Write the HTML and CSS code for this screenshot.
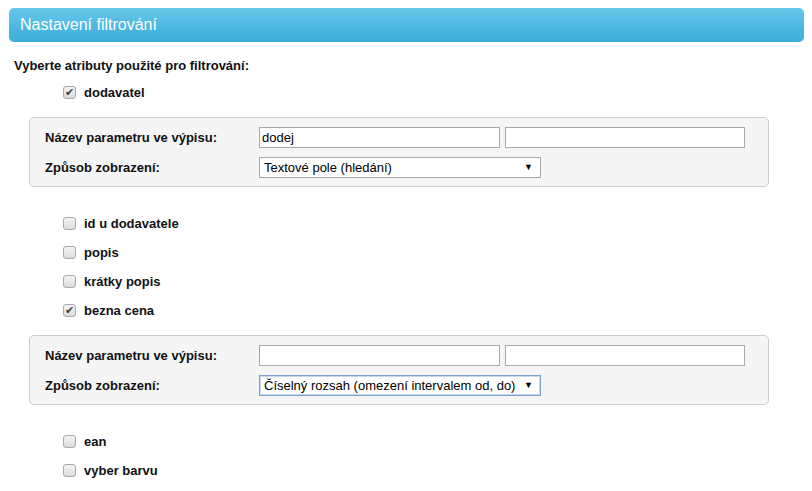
FILE: index.html
```html
<!DOCTYPE html>
<html lang="cs">
<head>
<meta charset="utf-8">
<title>Nastavení filtrování</title>
<link rel="stylesheet" href="styles.css">
</head>
<body>
<div class="header">Nastavení filtrování</div>
<div class="intro">Vyberte atributy použité pro filtrování:</div>
<div class="opt"><span class="cb checked"></span><span class="opt-label">dodavatel</span></div>
<div class="box">
  <div class="row">
    <div class="label">Název parametru ve výpisu:</div>
    <input class="inp inp1" type="text" value="dodej">
    <input class="inp inp2" type="text" value="">
  </div>
  <div class="row">
    <div class="label">Způsob zobrazení:</div>
    <div class="sel"><span class="sel-text">Textové pole (hledání)</span><span class="arrow">▼</span></div>
  </div>
</div>
<div class="opt first"><span class="cb"></span><span class="opt-label">id u dodavatele</span></div>
<div class="opt"><span class="cb"></span><span class="opt-label">popis</span></div>
<div class="opt"><span class="cb"></span><span class="opt-label">krátky popis</span></div>
<div class="opt"><span class="cb checked"></span><span class="opt-label">bezna cena</span></div>
<div class="box">
  <div class="row">
    <div class="label">Název parametru ve výpisu:</div>
    <input class="inp inp1" type="text" value="">
    <input class="inp inp2" type="text" value="">
  </div>
  <div class="row">
    <div class="label">Způsob zobrazení:</div>
    <div class="sel focus"><span class="sel-text">Číselný rozsah (omezení intervalem od, do)</span><span class="arrow">▼</span></div>
  </div>
</div>
<div class="opt first"><span class="cb"></span><span class="opt-label">ean</span></div>
<div class="opt"><span class="cb"></span><span class="opt-label">vyber barvu</span></div>
</body>
</html>
```
FILE: styles.css
```css
html, body {
  margin: 0;
  padding: 0;
  background: #ffffff;
}
body {
  font-family: "Liberation Sans", Arial, sans-serif;
  font-size: 13px;
  color: #111111;
  padding-top: 8px;
}
.header {
  margin: 0 8px 0 9px;
  height: 34px;
  line-height: 33px;
  padding-left: 11px;
  border-radius: 5px;
  background: linear-gradient(to bottom, #68c7eb 0%, #4bb7e0 60%, #3aaed9 100%);
  color: #ffffff;
  font-size: 16px;
}
.intro {
  margin: 14px 0 2px 14px;
  height: 20px;
  line-height: 20px;
  font-weight: bold;
}
.opt {
  display: flex;
  align-items: center;
  height: 29px;
  padding-left: 63px;
}
.opt.first {
  margin-top: 22px;
}
.cb {
  width: 11px;
  height: 11px;
  border: 1px solid #a9a9a9;
  border-radius: 3px;
  background: linear-gradient(to bottom, #f4f4f4, #dcdcdc);
  position: relative;
  margin-right: 8px;
  margin-top: -1px;
}
.cb.checked::after {
  content: "✔";
  position: absolute;
  left: 1px;
  top: -2px;
  font-size: 11px;
  line-height: 14px;
  color: #444444;
}
.opt-label {
  font-weight: bold;
}
.box {
  margin: 10px 43px 0 29px;
  border: 1px solid #cccccc;
  border-radius: 5px;
  background: #f5f5f5;
  padding: 9px 15px;
  display: flex;
  flex-direction: column;
  gap: 10px;
}
.row {
  display: flex;
  align-items: center;
  height: 20px;
}
.label {
  width: 214px;
  font-weight: bold;
}
.inp {
  box-sizing: border-box;
  height: 21px;
  border: 1px solid #a9a9a9;
  background: #ffffff;
  font-family: "Liberation Sans", Arial, sans-serif;
  font-size: 13px;
  color: #000000;
  padding: 0 2px;
  margin: 0;
}
.inp1 {
  width: 241px;
  margin-right: 5px;
}
.inp2 {
  width: 240px;
}
.sel {
  box-sizing: border-box;
  width: 282px;
  height: 21px;
  border: 1px solid #a9a9a9;
  background: #ffffff;
  display: flex;
  align-items: center;
  justify-content: space-between;
  padding: 0 7px 0 4px;
  color: #000000;
}
.sel.focus {
  border-color: #7da2ce;
  box-shadow: 0 0 0 1px #c5d8ee inset;
}
.arrow {
  font-size: 9px;
}
```
